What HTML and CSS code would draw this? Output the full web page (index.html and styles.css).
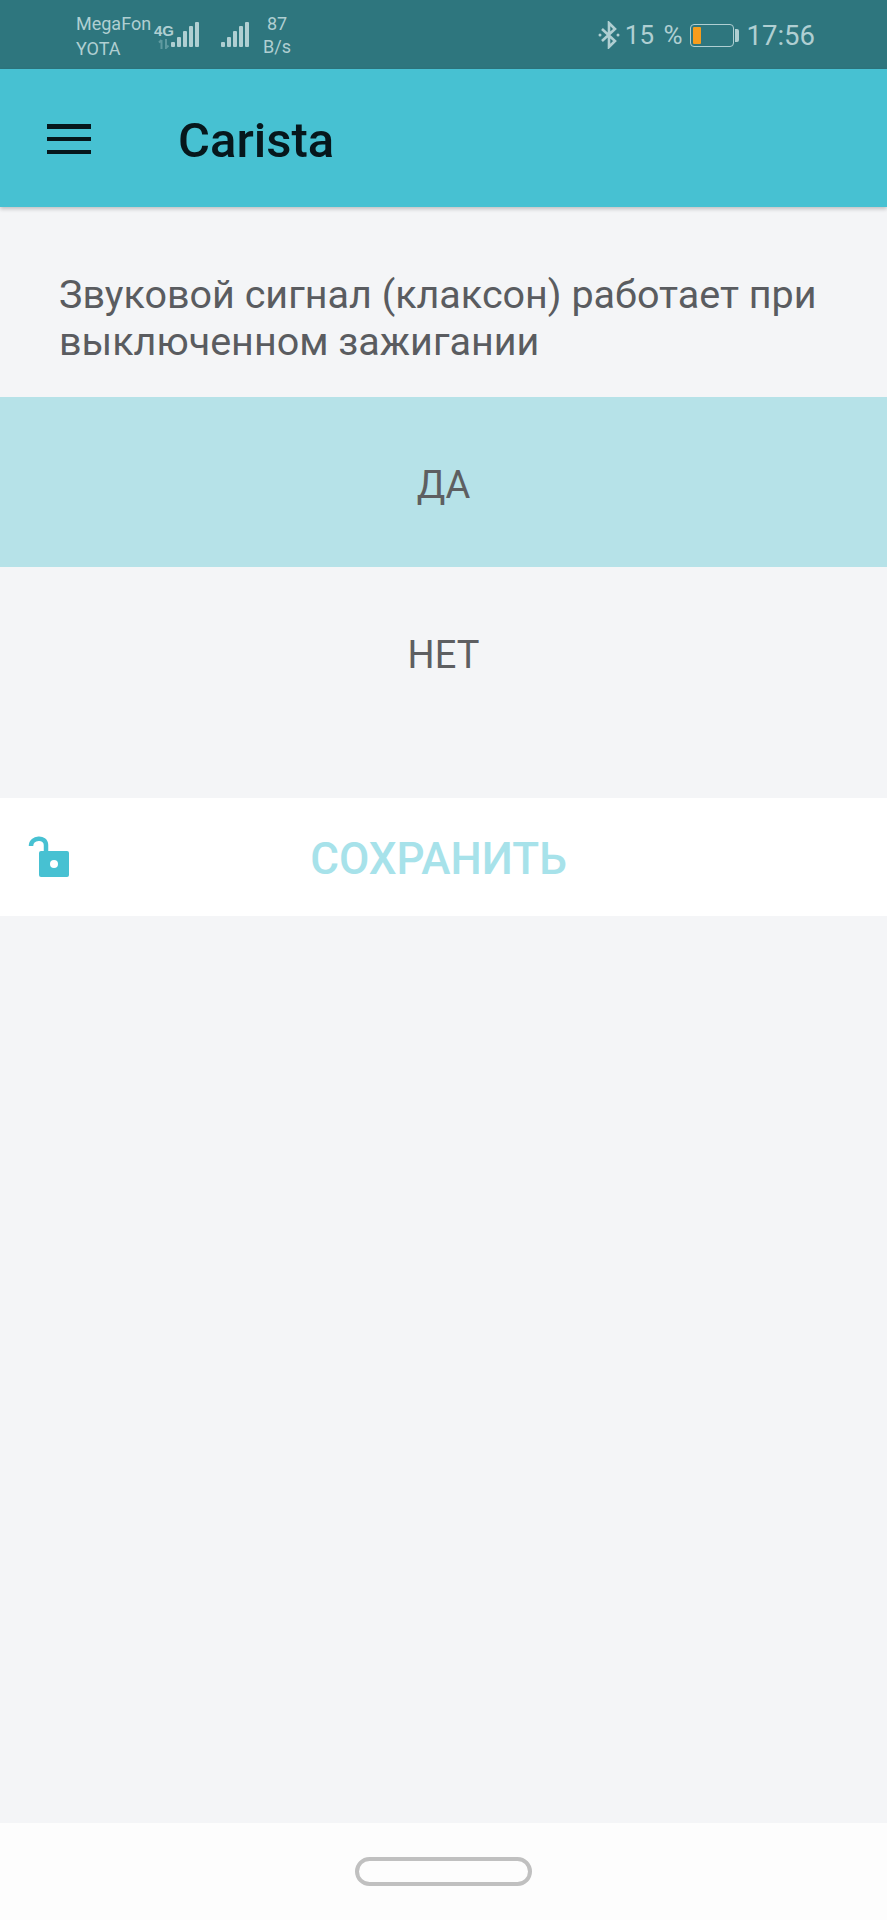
FILE: index.html
```html
<!DOCTYPE html>
<html lang="ru">
<head>
<meta charset="utf-8">
<title>Carista</title>
<link rel="stylesheet" href="styles.css">
</head>
<body>
<div class="screen">
  <div class="status">
    <div class="carriers"><span>MegaFon</span><span>YOTA</span></div>
    <div class="net">
      <span class="net-type">4G</span>
      <svg class="arrows" width="12" height="10" viewBox="0 0 12 10"><path d="M3.5 10V1M1 3.5 3.5 1M8 0v9l2.5-2.5" fill="none" stroke="#5f9aa0" stroke-width="2"/></svg>
    </div>
    <svg class="bars bars-a" width="28" height="26" viewBox="0 0 28 26"><g fill="#b0cfd2"><rect x="0" y="20" width="4" height="5" rx="1"/><rect x="6" y="15" width="4" height="10" rx="1"/><rect x="12" y="9" width="4" height="16" rx="1"/><rect x="18" y="4" width="4" height="21" rx="1"/><rect x="24" y="0" width="4" height="25" rx="1"/></g></svg>
    <svg class="bars bars-b" width="28" height="26" viewBox="0 0 28 26"><g fill="#b0cfd2"><rect x="0" y="20" width="4" height="5" rx="1"/><rect x="6" y="15" width="4" height="10" rx="1"/><rect x="12" y="9" width="4" height="16" rx="1"/><rect x="18" y="4" width="4" height="21" rx="1"/><rect x="24" y="0" width="4" height="25" rx="1"/></g></svg>
    <div class="speed"><span>87</span><span>B/s</span></div>
    <div class="status-right">
      <svg class="bt" width="22" height="28" viewBox="0 0 22 28"><path d="M4 8l13 12-6 6V2l6 6L4 20" fill="none" stroke="#b0cfd2" stroke-width="2.6"/><circle cx="2" cy="14" r="1.5" fill="#b0cfd2"/><circle cx="20" cy="14" r="1.5" fill="#b0cfd2"/></svg>
      <span class="pct">15 %</span>
      <div class="battery"><div class="battery-body"><div class="battery-fill"></div></div><div class="battery-cap"></div></div>
      <span class="clock">17:56</span>
    </div>
  </div>
  <header class="toolbar">
    <div class="menu"><i></i><i></i><i></i></div>
    <div class="title">Carista</div>
  </header>
  <main class="content">
    <p class="question">Звуковой сигнал (клаксон) работает при выключенном зажигании</p>
    <div class="option selected">ДА</div>
    <div class="option">НЕТ</div>
    <div class="save">
      <svg class="lock" width="42" height="42" viewBox="0 0 42 42"><path d="M3 10C3 1 18 0 18 9v8" fill="none" stroke="#47c1d2" stroke-width="4.5"/><rect x="11" y="15" width="30" height="26" rx="2" fill="#47c1d2"/><circle cx="26" cy="28" r="4" fill="#fff"/></svg>
      <span class="save-label">СОХРАНИТЬ</span>
    </div>
  </main>
  <nav class="navbar"><div class="home"></div></nav>
</div>
</body>
</html>
```
FILE: styles.css
```css
* { box-sizing: border-box; }
html, body { margin: 0; padding: 0; }
body { font-family: Roboto, "Noto Sans", sans-serif; background: #f4f5f7; }
.screen { width: 887px; height: 1920px; display: flex; flex-direction: column; overflow: hidden; }

.status { height: 69px; flex: none; background: #2e767e; color: #b0cfd2; display: flex; align-items: center; padding: 0 0 0 76px; }
.carriers { display: flex; flex-direction: column; font-size: 18px; line-height: 25px; width: 80px; margin-top: 2px; }
.net { width: 16px; display: flex; flex-direction: column; align-items: center; margin-top: 2px; }
.net-type { font-size: 15px; line-height: 15px; font-weight: 700; font-family: "Liberation Sans Narrow", "Liberation Sans", sans-serif; }
.arrows { display: block; margin-top: 1px; }
.bars-a { margin: 0 0 0 -1px; }
.bars-b { margin-left: 22px; }
.speed { display: flex; flex-direction: column; align-items: center; font-size: 18px; line-height: 23px; margin-left: 14px; width: 28px; margin-top: 1px; }
.status-right { margin-left: auto; margin-right: 72px; display: flex; align-items: center; margin-top: 1px; }
.bt { margin-right: 5px; }
.pct { font-size: 26px; word-spacing: 3px; }
.battery { display: flex; align-items: center; margin: 0 8px 0 7px; }
.battery-body { width: 44px; height: 23px; border: 1.5px solid #b0cfd2; border-radius: 4px; padding: 2px; }
.battery-fill { width: 8px; height: 100%; background: #f79c1c; border-radius: 1px; }
.battery-cap { width: 4px; height: 13px; background: #b0cfd2; margin-left: 1px; border-radius: 0 2px 2px 0; }
.clock { font-size: 27.5px; }

.toolbar { height: 138px; flex: none; background: #47c1d2; display: flex; align-items: center; padding-left: 47px; box-shadow: 0 2px 4px rgba(0,0,0,.22); position: relative; }
.menu { width: 44px; height: 30px; margin-top: 2px; display: flex; flex-direction: column; justify-content: space-between; }
.menu i { display: block; height: 4.5px; background: #06171c; }
.title { margin-left: 87px; font-size: 49px; font-weight: 500; color: #06171c; margin-top: 4px; }

.content { flex: 1; display: flex; flex-direction: column; }
.question { margin: 0; padding: 64px 40px 0 59px; height: 190px; font-size: 39.5px; line-height: 47px; color: #5a5c60; }
.option { height: 170px; flex: none; display: flex; align-items: center; justify-content: center; font-size: 38px; color: #5e5f61; padding-top: 5px; }
.selected { background: #b6e2e8; }
.save { margin-top: 61px; height: 118px; background: #fff; display: flex; align-items: center; justify-content: center; position: relative; }
.lock { position: absolute; left: 28px; top: 38px; }
.save-label { font-size: 44px; font-weight: 500; color: #a7e2ea; margin-left: -10px; padding-top: 4px; }

.navbar { height: 97px; flex: none; background: #fdfdfd; display: flex; align-items: center; justify-content: center; }
.home { width: 177px; height: 29px; border: 4px solid #c0c0c0; border-radius: 15px; margin-top: -1px; }
```
